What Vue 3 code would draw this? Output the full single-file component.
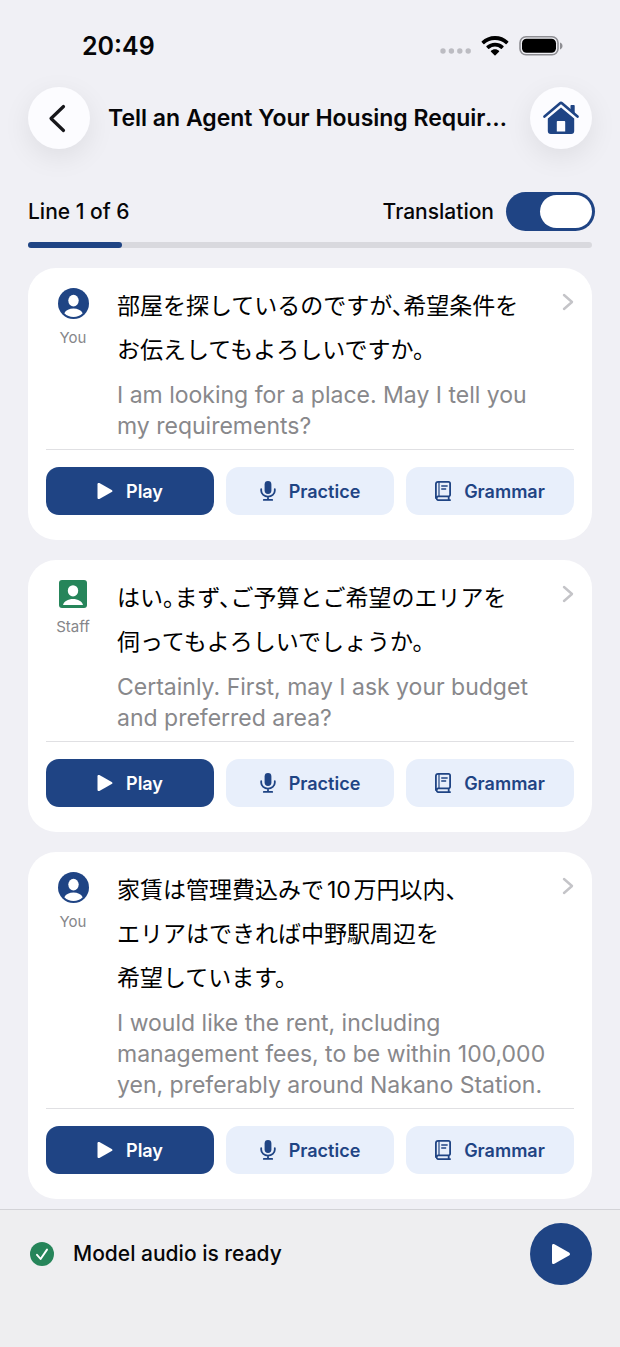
<script setup>
import { computed, ref } from "vue";

const title = "Tell an Agent Your Housing Requirements";
const total = 6;
const current = ref(1);
const showTranslation = ref(true);

const lines = [
  {
    id: 1,
    speaker: "You",
    ja: "部屋を探しているのですが、希望条件を\nお伝えしてもよろしいですか。",
    en: "I am looking for a place. May I tell you my requirements?",
  },
  {
    id: 2,
    speaker: "Staff",
    ja: "はい。まず、ご予算とご希望のエリアを\n伺ってもよろしいでしょうか。",
    en: "Certainly. First, may I ask your budget and preferred area?",
  },
  {
    id: 3,
    speaker: "You",
    ja: "家賃は管理費込みで10万円以内、\nエリアはできれば中野駅周辺を\n希望しています。",
    en: "I would like the rent, including management fees, to be within 100,000 yen, preferably around Nakano Station.",
  },
];

const progress = computed(() => (current.value / total) * 100 + "%");

const play = (id) => {
  current.value = id;
};
</script>
<template>
  <div class="screen">
    <div class="status-bar">
      <span class="clock">20:49</span>
      <div class="status-icons">
        <svg class="dots" width="32" height="8" viewBox="0 0 32 8">
          <circle cx="4" cy="3" r="2.7" />
          <circle cx="12.400" cy="3" r="2.7" />
          <circle cx="20.800" cy="3" r="2.7" />
          <circle cx="29.200" cy="3" r="2.7" />
        </svg>
        <svg class="wifi" width="28" height="20" viewBox="0 0 28 20">
          <path d="M14 0C8.900 0 4.200 2 .8 5.300a.7.7 0 0 0 0 1l1.600 1.600a.7.7 0 0 0 1 0A15.200 15.200 0 0 1 14 3.900c4.100 0 7.800 1.600 10.600 4a.7.7 0 0 0 1 0l1.600-1.600a.7.7 0 0 0 0-1A19 19 0 0 0 14 0z" />
          <path d="M14 6.800c-3.300 0-6.300 1.300-8.500 3.300a.7.7 0 0 0 0 1l1.700 1.600c.3.300.7.300 1 0a8.600 8.600 0 0 1 11.600 0c.3.300.7.300 1 0l1.700-1.600a.7.7 0 0 0 0-1A12.500 12.500 0 0 0 14 6.800z" />
          <path d="M14 13.300c-1.600 0-3 .6-4 1.500a.7.7 0 0 0 0 1l3.500 3.500c.3.300.7.300 1 0l3.500-3.500a.7.700 0 0 0 0-1c-1-.9-2.400-1.500-4-1.500z" />
        </svg>
        <svg class="battery" width="44" height="20" viewBox="0 0 44 20">
          <rect x="1" y=".8" width="38" height="18" rx="6" fill="none" stroke="#8e8e93" stroke-width="1.600" />
          <rect x="3" y="2.800" width="34" height="14" rx="4.500" />
          <path d="M41 6.500c1.500.6 2.500 1.900 2.500 3.500s-1 2.900-2.500 3.500z" fill="#8e8e93" />
        </svg>
      </div>
    </div>

    <header class="header">
      <button class="round-button" aria-label="Back">
        <svg width="30" height="30" viewBox="0 0 30 30">
          <path d="M19.500 3.500L7 15.500l12.500 12" class="back-line" />
        </svg>
      </button>
      <h1 class="title">{{ title }}</h1>
      <button class="round-button" aria-label="Home">
        <svg class="home-icon" width="36" height="34" viewBox="0 0 36 34">
          <path d="M1.500 15.600L16.800 2.500a1.800 1.800 0 0 1 2.400 0L34.500 15.600" fill="none" stroke="currentColor" stroke-width="2.600" stroke-linecap="round" stroke-linejoin="round" />
          <path d="M27.500 4.800a.8.8 0 0 1 .8-.8h2.600a.8.8 0 0 1 .8.800v7.400l-4.200-3.600z" />
          <path d="M18 6.500L4.800 17.600V30a3 3 0 0 0 3 3h20.400a3 3 0 0 0 3-3V17.600zM14.800 20h6.400c.6 0 1 .4 1 1v9.600h-8.400V21c0-.6.4-1 1-1z" fill-rule="evenodd" />
        </svg>
      </button>
    </header>

    <section class="progress-area">
      <div class="progress-row">
        <span class="line-count">Line {{ current }} of {{ total }}</span>
        <label class="translation">
          Translation
          <input v-model="showTranslation" class="switch" type="checkbox" role="switch" />
        </label>
      </div>
      <div class="track">
        <div class="track-fill" :style="{ width: progress }"></div>
      </div>
    </section>

    <main class="cards">
      <article v-for="line in lines" :key="line.id" class="card">
        <div class="card-body">
          <div class="speaker">
            <svg v-if="line.speaker === 'You'" class="you-icon" width="31" height="31" viewBox="0 0 31 31">
              <circle cx="15.500" cy="15.500" r="15.500" />
              <ellipse cx="15.500" cy="12.600" rx="5.200" ry="5.900" fill="#fff" />
              <path d="M6.300 25.200c1.600-3 5.200-4.600 9.200-4.600s7.600 1.600 9.200 4.600a13.200 13.200 0 0 1-18.400 0z" fill="#fff" />
            </svg>
            <svg v-else class="staff-icon" width="28" height="28" viewBox="0 0 28 28">
              <rect width="28" height="28" rx="3" />
              <ellipse cx="14" cy="10.800" rx="5.200" ry="5.600" fill="#fff" />
              <path d="M4 25c.8-3.600 5-6 10-6s9.200 2.400 10 6z" fill="#fff" />
            </svg>
            <span class="speaker-name">{{ line.speaker }}</span>
          </div>
          <div class="texts">
            <p class="ja" lang="ja">{{ line.ja }}</p>
            <p v-if="showTranslation" class="en">{{ line.en }}</p>
          </div>
          <button class="detail" aria-label="Details">
            <svg width="12" height="18" viewBox="0 0 12 18">
              <path d="M2 2l8 7-8 7" />
            </svg>
          </button>
        </div>
        <div class="actions">
          <button class="action play" @click="play(line.id)">
            <svg width="16" height="18" viewBox="0 0 16 18">
              <path d="M.5 2.200C.5 1 1.400.6 2.400 1.100l12.300 6.800c1 .6 1 1.600 0 2.200L2.400 16.900c-1 .5-1.900.1-1.900-1.100z" />
            </svg>
            Play
          </button>
          <button class="action">
            <svg width="16" height="20" viewBox="0 0 16 20">
              <rect x="4.600" y="0" width="6.800" height="13" rx="3.400" />
              <path d="M1.200 8.200v1.600a6.800 5.800 0 0 0 13.600 0V8.200M8 15.600v3M3.800 18.900h8.400" fill="none" stroke="currentColor" stroke-width="1.800" stroke-linecap="round" />
            </svg>
            Practice
          </button>
          <button class="action">
            <svg width="16" height="20" viewBox="0 0 16 20">
              <g fill="none" stroke="currentColor" stroke-width="1.800" stroke-linecap="round" stroke-linejoin="round">
                <path d="M.9 17V3A2.200 2.200 0 0 1 3.100.9h10.500a1.500 1.500 0 0 1 1.500 1.500v11.400a1.500 1.500 0 0 1-1.500 1.500H3A2 2 0 0 0 3 19.100h12.100M13.700 15.500v3.500" />
                <path d="M4 1.200v13.800" stroke-width="1.200" />
                <path d="M6.700 5h5.500M6.700 8h4" stroke-width="1.300" />
              </g>
            </svg>
            Grammar
          </button>
        </div>
      </article>
    </main>

    <footer class="player">
      <svg class="check" width="24" height="24" viewBox="0 0 24 24">
        <circle cx="12" cy="12" r="12" />
        <path d="M7 12.800l3.600 4.200L17 7.600" fill="none" stroke="#fff" stroke-width="1.900" stroke-linecap="round" stroke-linejoin="round" />
      </svg>
      <span class="player-status">Model audio is ready</span>
      <button class="player-button" aria-label="Play all">
        <svg width="20" height="22" viewBox="0 0 20 22">
          <path d="M1 2.800C1 1 2.100.5 3.400 1.200l14.600 8.200c1.300.8 1.300 2.400 0 3.200L3.400 20.800C2.100 21.500 1 21 1 19.200z" />
        </svg>
      </button>
    </footer>
  </div>
</template>
<style>
body {
  margin: 0;
  background-color: #f0f0f5;
}
</style>
<style scoped>
.screen {
  display: flex;
  flex-direction: column;
  min-height: 100vh;
  background-color: #f0f0f5;
  color: #060608;
  font-family: Inter, "Noto Sans CJK JP", sans-serif;
}
button {
  display: flex;
  align-items: center;
  justify-content: center;
  padding: 0;
  border: none;
  font-family: inherit;
  cursor: pointer;
}
svg {
  flex: none;
  fill: currentColor;
}
.status-bar {
  display: flex;
  justify-content: space-between;
  align-items: center;
  padding: 30px 57px 0 82px;
}
.clock {
  font-size: 25px;
  line-height: 32px;
  font-weight: 600;
}
.status-icons {
  display: flex;
  align-items: center;
  gap: 10px;
  color: #000;
}
.dots {
  align-self: flex-end;
  color: #bcbcc2;
}
.header {
  display: flex;
  align-items: center;
  gap: 18px;
  padding: 25px 28px 0;
}
.round-button {
  flex: none;
  width: 62px;
  height: 62px;
  border-radius: 50%;
  background-color: #fcfcff;
  color: #1f4484;
  box-shadow: 0 8px 28px rgba(0, 0, 0, 0.08);
}
.back-line {
  fill: none;
  stroke: #17171b;
  stroke-width: 3.2;
  stroke-linecap: round;
  stroke-linejoin: round;
}
.title {
  flex: 1;
  min-width: 0;
  margin: 0;
  overflow: hidden;
  font-size: 23px;
  line-height: 32px;
  font-weight: 600;
  white-space: nowrap;
  text-overflow: ellipsis;
}
.progress-area {
  padding: 43px 28px 0;
}
.progress-row {
  display: flex;
  justify-content: space-between;
  align-items: center;
  margin-right: -3px;
  font-size: 21px;
  line-height: 28px;
  font-weight: 500;
}
.translation {
  display: flex;
  align-items: center;
  gap: 12px;
}
.switch {
  appearance: none;
  width: 89px;
  height: 39px;
  margin: 0;
  padding: 3px;
  box-sizing: border-box;
  border-radius: 20px;
  background-color: #c9c9d0;
  cursor: pointer;
}
.switch::before {
  content: "";
  display: block;
  width: 52px;
  height: 33px;
  border-radius: 17px;
  background-color: #fff;
}
.switch:checked {
  background-color: #1f4484;
}
.switch:checked::before {
  margin-left: auto;
}
.track {
  height: 6px;
  margin-top: 11px;
  border-radius: 3px;
  background-color: #d9d9de;
}
.track-fill {
  height: 100%;
  border-radius: 3px;
  background-color: #1f4484;
}
.cards {
  display: flex;
  flex: 1;
  flex-direction: column;
  gap: 20px;
  padding: 20px 28px 10px;
}
.card {
  padding: 16px 18px 25px;
  border-radius: 28px;
  background-color: #fff;
}
.card-body {
  display: flex;
  padding-bottom: 7px;
  border-bottom: 1px solid #e0e0e3;
}
.speaker {
  display: flex;
  flex: none;
  flex-direction: column;
  align-items: center;
  gap: 10px;
  width: 54px;
  margin-right: 17px;
  padding-top: 4px;
}
.you-icon {
  color: #1f4484;
}
.staff-icon {
  color: #26855a;
}
.speaker-name {
  color: #86868a;
  font-size: 15px;
  line-height: 18px;
}
.texts {
  flex: 1;
  min-width: 0;
}
/* 句読点は半角幅で組む */
.ja {
  margin: 0;
  color: #000;
  font-size: 23px;
  line-height: 44px;
  white-space: pre-line;
  text-autospace: normal;
  font-feature-settings: "halt";
}
.en {
  margin: 8px 0 0;
  color: #88888b;
  font-size: 23px;
  line-height: 31px;
}
.detail {
  align-self: flex-start;
  height: 36px;
  background: none;
}
.detail path {
  fill: none;
  stroke: #c4c4c8;
  stroke-width: 2.4;
  stroke-linecap: round;
  stroke-linejoin: round;
}
.actions {
  display: grid;
  grid-template-columns: repeat(3, 1fr);
  gap: 12px;
  padding-top: 17px;
}
.action {
  gap: 13px;
  height: 48px;
  border-radius: 13px;
  background-color: #e8effb;
  color: #1f4484;
  font-size: 18px;
  font-weight: 600;
}
.play {
  background-color: #1f4484;
  color: #fff;
}
.player {
  display: flex;
  position: sticky;
  bottom: 0;
  align-items: center;
  padding: 13px 28px 62px 30px;
  border-top: 1px solid #d3d3d7;
  background-color: #eeeef0;
}
.check {
  color: #26855a;
}
.player-status {
  flex: 1;
  margin-left: 19px;
  font-size: 21px;
  line-height: 28px;
  font-weight: 500;
}
.player-button {
  width: 62px;
  height: 62px;
  border-radius: 50%;
  background-color: #1f4484;
  color: #fff;
}
</style>
